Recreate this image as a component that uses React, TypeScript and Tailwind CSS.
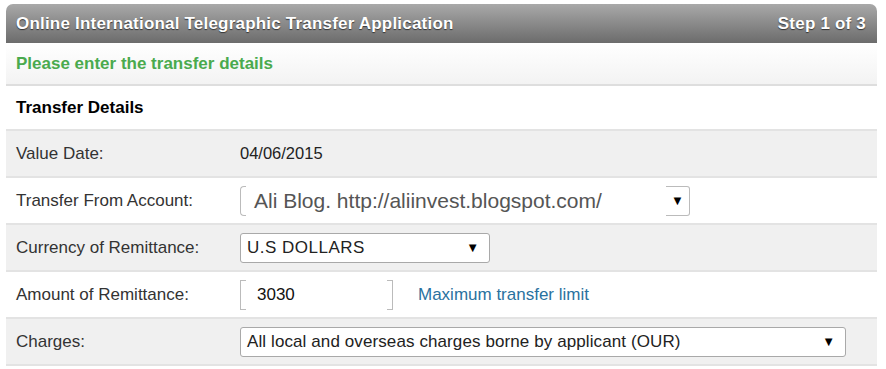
import React from "react";

const Arrow = () => <span className="text-[13px] leading-none text-black">▼</span>;

function Row({ label, gray, children }: { label: string; gray?: boolean; children?: React.ReactNode }) {
  return (
    <div className={`flex items-center h-[47px] border-b-2 border-[#e3e3e3] ${gray ? "bg-[#f0f0f0]" : "bg-white"}`}>
      <div className="w-[234px] pl-[10px] text-[17px] text-[#333]">{label}</div>
      <div className="flex-1 flex items-center">{children}</div>
    </div>
  );
}

export default function App() {
  return (
    <div className="w-[886px] h-[369px] bg-white pt-[4px] pl-[6px]" style={{ fontFamily: '"Liberation Sans", Arial, sans-serif' }}>
      <div className="w-[871px]">
        <div className="h-[39px] rounded-t-[7px] bg-gradient-to-b from-[#a9a9a9] to-[#6c6c6c] flex items-center justify-between px-[10px] text-white font-bold text-[17px] tracking-[0.2px] [text-shadow:0_1px_1px_#333]">
          <span>Online International Telegraphic Transfer Application</span>
          <span className="pr-[1px]">Step 1 of 3</span>
        </div>
        <div className="h-[43px] bg-gradient-to-b from-white to-[#f3f3f3] border-b-2 border-[#dedede] flex items-center pl-[10px] text-[17px] font-bold text-[#4aaa4e]">
          Please enter the transfer details
        </div>
        <div className="h-[45px] bg-white border-b-2 border-[#e3e3e3] flex items-center pl-[10px] text-[17px] font-bold text-black">
          Transfer Details
        </div>
        <Row label="Value Date:" gray>
          <span className="text-[16.5px] text-[#222]">04/06/2015</span>
        </Row>
        <Row label="Transfer From Account:">
          <div className="flex items-center h-[30px]">
            <div className="w-[6px] h-[30px] border-l border-t border-b border-[#bbb] rounded-l-[4px]" />
            <span className="ml-[8px] w-[412px] text-[21px] text-[#555] leading-none">Ali Blog. http://aliinvest.blogspot.com/</span>
            <div className="w-[24px] h-[30px] border border-l-0 border-[#bbb] rounded-r-[3px] flex items-center justify-center">
              <Arrow />
            </div>
          </div>
        </Row>
        <Row label="Currency of Remittance:" gray>
          <div className="w-[250px] h-[30px] bg-white border border-[#a9a9a9] rounded-[3px] flex items-center justify-between pl-[6px] pr-[10px] text-[17px] text-[#222]">
            <span className="tracking-[0.5px]">U.S DOLLARS</span>
            <Arrow />
          </div>
        </Row>
        <Row label="Amount of Remittance:">
          <div className="flex items-center">
            <div className="w-[153px] h-[30px] border-l border-r border-[#bbb] relative flex items-center pl-[16px] text-[17px] text-[#111]">
              <span className="absolute left-0 top-0 w-[5px] border-t border-[#bbb]" />
              <span className="absolute left-0 bottom-0 w-[5px] border-b border-[#bbb]" />
              <span className="absolute right-0 top-0 w-[5px] border-t border-[#bbb]" />
              <span className="absolute right-0 bottom-0 w-[5px] border-b border-[#bbb]" />
              3030
            </div>
            <span className="ml-[25px] text-[17px] text-[#2a72a0]">Maximum transfer limit</span>
          </div>
        </Row>
        <Row label="Charges:" gray>
          <div className="w-[606px] h-[30px] bg-white border border-[#a9a9a9] rounded-[3px] flex items-center justify-between pl-[6px] pr-[10px] text-[17px] text-[#222]">
            <span className="tracking-[0.1px]">All local and overseas charges borne by applicant (OUR)</span>
            <Arrow />
          </div>
        </Row>
      </div>
    </div>
  );
}
